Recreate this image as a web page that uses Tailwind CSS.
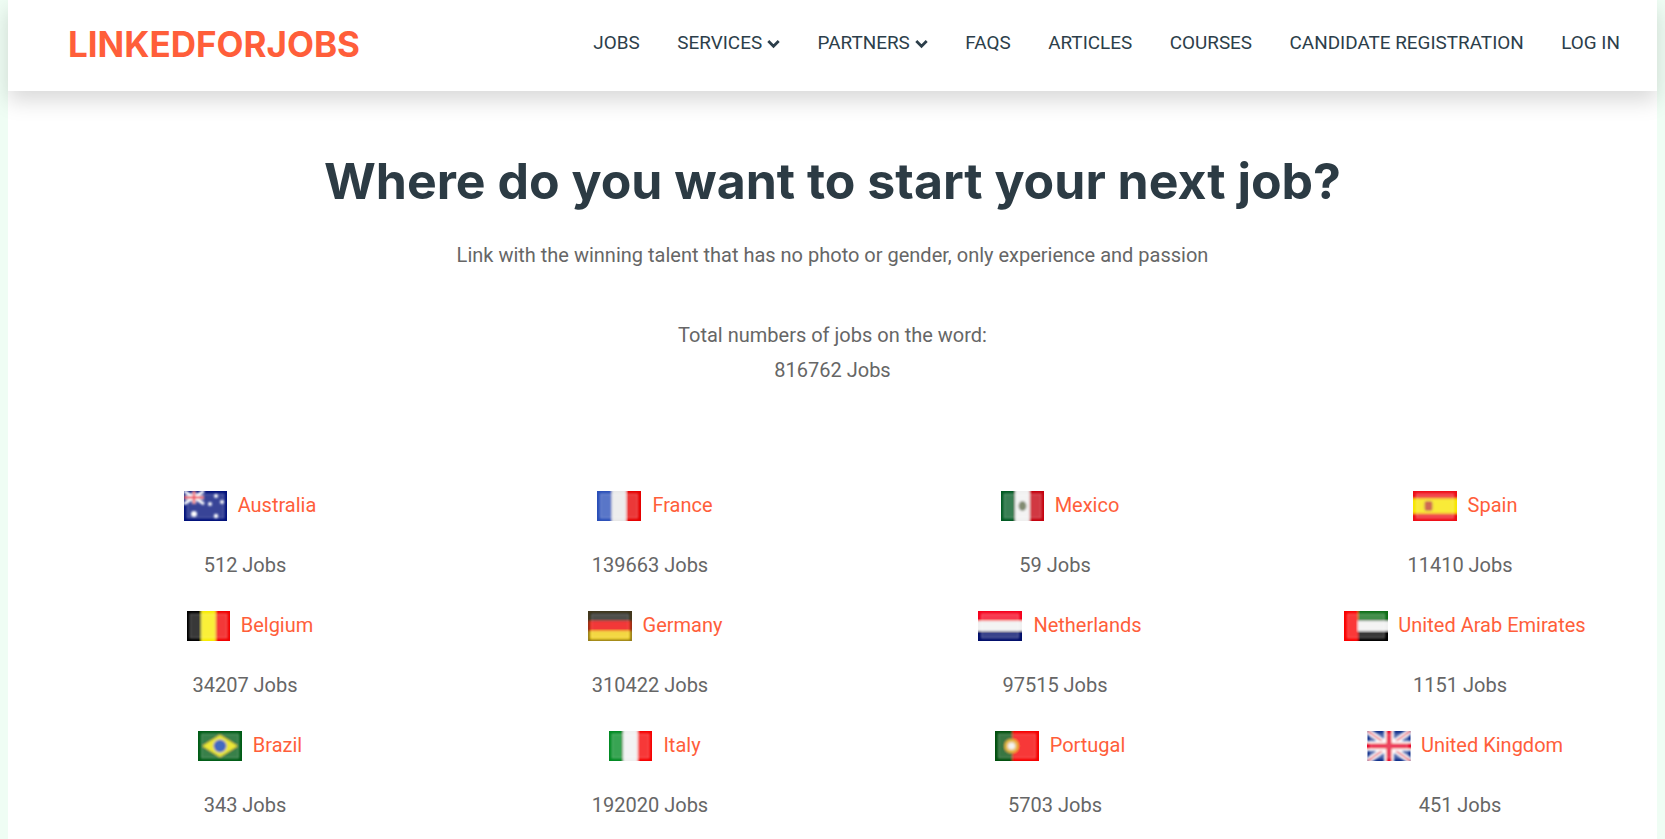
<!DOCTYPE html>
<html lang="en">
<head>
  <meta charset="UTF-8">
  <meta name="viewport" content="width=device-width, initial-scale=1.0">
  <title>LinkedForJobs</title>
  <script src="https://cdn.jsdelivr.net/npm/@tailwindcss/browser@4"></script>
</head>
<body class="h-screen overflow-hidden bg-[#effdf4] px-2 font-['Roboto',sans-serif] text-[20px] text-[#666666]">
  <!-- shared blur and gloss for the flags -->
  <svg class="absolute h-0 w-0">
    <defs>
      <filter id="soft" x="-10%" y="-10%" width="120%" height="120%"><feGaussianBlur stdDeviation="0.9"/></filter>
      <g id="gloss">
        <rect x="3" y="3" width="37" height="24" fill="#fff" fill-opacity="0.22" stroke="#fff" stroke-opacity="0.3" filter="url(#soft)"/>
      </g>
    </defs>
  </svg>

  <div class="h-full bg-white">
    <header class="flex h-[91px] items-center justify-between pl-[60px] pr-[37px] shadow-[0_10px_20px_rgba(0,0,0,0.15)]">
      <a class="-mt-[2px] font-['Inter',sans-serif] text-[35px] font-bold text-[#ff5e3a]">LINKEDFORJOBS</a>
      <nav class="-mt-[4px] flex items-center gap-[37.5px] text-[18.9px] leading-none text-[#2c3e4a]">
        <a>JOBS</a>
        <a class="flex items-center gap-[5px]">SERVICES
          <svg class="mt-[1px] h-[10px] w-[13px]" viewBox="0 0 13 10" fill="none" stroke="#2c3e4a" stroke-width="2.8"><path d="M1.300 2 6.500 7.200 11.700 2"/></svg>
        </a>
        <a class="flex items-center gap-[5px]">PARTNERS
          <svg class="mt-[1px] h-[10px] w-[13px]" viewBox="0 0 13 10" fill="none" stroke="#2c3e4a" stroke-width="2.8"><path d="M1.300 2 6.500 7.200 11.700 2"/></svg>
        </a>
        <a>FAQS</a>
        <a>ARTICLES</a>
        <a>COURSES</a>
        <a>CANDIDATE REGISTRATION</a>
        <a>LOG IN</a>
      </nav>
    </header>

    <main>
      <section class="text-center">
        <h1 class="pt-[56px] font-['Inter',sans-serif] text-[50px] font-bold leading-[68px] text-[#2c3b44]">Where do you want to start your next job?</h1>
        <p class="mt-[23px] leading-[35px]">Link with the winning talent that has no photo or gender, only experience and passion</p>
        <p class="mt-[45px] leading-[35px]">Total numbers of jobs on the word:</p>
        <p class="leading-[35px]">816762 Jobs</p>
      </section>

      <ul class="ml-[34.5px] mt-[103px] grid w-[1620px] grid-cols-4">
        <li class="flex h-[120px] flex-col items-center">
          <a class="flex h-[30px] items-center gap-[11px] pl-[10px] text-[#ff5e3a]">
            <svg class="h-[30px] w-[43px]" viewBox="0 0 43 30"><rect width="43" height="30" fill="#00107a"/><g filter="url(#soft)"><path d="M0 0l20 13M20 0L0 13" stroke="#fff" stroke-width="3"/><path d="M10 0v13M0 6.500h20" stroke="#fff" stroke-width="4"/><path d="M10 0v13M0 6.500h20" stroke="#e8112d" stroke-width="2.500"/><g fill="#fff"><circle cx="10" cy="23" r="3"/><circle cx="32" cy="5" r="2"/><circle cx="32" cy="25" r="2.200"/><circle cx="26" cy="13" r="2"/><circle cx="38" cy="11" r="2"/></g></g><use href="#gloss"/></svg>
            <span class="-mt-[2px]">Australia</span>
          </a>
          <p class="mt-[29px] leading-[30px]">512 Jobs</p>
        </li>
        <li class="flex h-[120px] flex-col items-center">
          <a class="flex h-[30px] items-center gap-[11px] pl-[10px] text-[#ff5e3a]">
            <svg class="h-[30px] w-[44px]" viewBox="0 0 43 30"><g filter="url(#soft)"><path d="M-3-3h17.300v36H-3z" fill="#2a50b8"/><path d="M14.300-3h14.400v36H14.300z" fill="#e8e8e8"/><path d="M28.700-3H46v36H28.700z" fill="#e50000"/></g><use href="#gloss"/></svg>
            <span class="-mt-[2px]">France</span>
          </a>
          <p class="mt-[29px] leading-[30px]">139663 Jobs</p>
        </li>
        <li class="flex h-[120px] flex-col items-center">
          <a class="flex h-[30px] items-center gap-[11px] pl-[10px] text-[#ff5e3a]">
            <svg class="h-[30px] w-[43px]" viewBox="0 0 43 30"><g filter="url(#soft)"><path d="M-3-3h17.300v36H-3z" fill="#005a20"/><path d="M14.300-3h14.400v36H14.300z" fill="#f0f0f0"/><path d="M28.700-3H46v36H28.700z" fill="#c40010"/><ellipse cx="21.500" cy="15" rx="4" ry="5" fill="#5f6a48"/></g><use href="#gloss"/></svg>
            <span class="-mt-[2px]">Mexico</span>
          </a>
          <p class="mt-[29px] leading-[30px]">59 Jobs</p>
        </li>
        <li class="flex h-[120px] flex-col items-center">
          <a class="flex h-[30px] items-center gap-[11px] pl-[10px] text-[#ff5e3a]">
            <svg class="h-[30px] w-[44px]" viewBox="0 0 43 30"><g filter="url(#soft)"><rect x="-3" y="-3" width="49" height="36" fill="#ee0a12"/><rect x="-3" y="7.500" width="49" height="15" fill="#f7e500"/><rect x="11" y="10" width="8" height="10" rx="2" fill="#c04020"/></g><use href="#gloss"/></svg>
            <span class="-mt-[2px]">Spain</span>
          </a>
          <p class="mt-[29px] leading-[30px]">11410 Jobs</p>
        </li>

        <li class="flex h-[120px] flex-col items-center">
          <a class="flex h-[30px] items-center gap-[11px] pl-[10px] text-[#ff5e3a]">
            <svg class="h-[30px] w-[43px]" viewBox="0 0 43 30"><g filter="url(#soft)"><path d="M-3-3h17.300v36H-3z" fill="#000"/><path d="M14.300-3h14.400v36H14.300z" fill="#f8ec00"/><path d="M28.700-3H46v36H28.700z" fill="#f00000"/></g><use href="#gloss"/></svg>
            <span class="-mt-[2px]">Belgium</span>
          </a>
          <p class="mt-[29px] leading-[30px]">34207 Jobs</p>
        </li>
        <li class="flex h-[120px] flex-col items-center">
          <a class="flex h-[30px] items-center gap-[11px] pl-[10px] text-[#ff5e3a]">
            <svg class="h-[30px] w-[44px]" viewBox="0 0 43 30"><g filter="url(#soft)"><rect x="-3" y="-3" width="49" height="13" fill="#1a1a14"/><rect x="-3" y="10" width="49" height="10" fill="#ee0000"/><rect x="-3" y="20" width="49" height="13" fill="#f0cc10"/><path d="M0 0h43v30H0z" fill="none" stroke="#5a4a20" stroke-width="3" stroke-opacity="0.7"/></g><use href="#gloss"/></svg>
            <span class="-mt-[2px]">Germany</span>
          </a>
          <p class="mt-[29px] leading-[30px]">310422 Jobs</p>
        </li>
        <li class="flex h-[120px] flex-col items-center">
          <a class="flex h-[30px] items-center gap-[11px] pl-[10px] text-[#ff5e3a]">
            <svg class="h-[30px] w-[44px]" viewBox="0 0 43 30"><g filter="url(#soft)"><rect x="-3" y="-3" width="49" height="13" fill="#f5001e"/><rect x="-3" y="10" width="49" height="10" fill="#f0f0f0"/><rect x="-3" y="20" width="49" height="13" fill="#000e6a"/></g><use href="#gloss"/></svg>
            <span class="-mt-[2px]">Netherlands</span>
          </a>
          <p class="mt-[29px] leading-[30px]">97515 Jobs</p>
        </li>
        <li class="flex h-[120px] flex-col items-center">
          <a class="flex h-[30px] items-center gap-[10px] pl-[10px] text-[#ff5e3a]">
            <svg class="h-[30px] w-[44px]" viewBox="0 0 43 30"><g filter="url(#soft)"><rect x="13.500" y="-3" width="33" height="13" fill="#0a6e14"/><rect x="13.500" y="10" width="33" height="10" fill="#f0f0f0"/><rect x="13.500" y="20" width="33" height="13" fill="#000"/><rect x="-3" y="-3" width="16.500" height="36" fill="#fa0000"/></g><use href="#gloss"/></svg>
            <span class="-mt-[2px]">United Arab Emirates</span>
          </a>
          <p class="mt-[29px] leading-[30px]">1151 Jobs</p>
        </li>

        <li class="flex h-[120px] flex-col items-center">
          <a class="flex h-[30px] items-center gap-[11px] pl-[10px] text-[#ff5e3a]">
            <svg class="h-[30px] w-[44px]" viewBox="0 0 43 30"><g filter="url(#soft)"><rect x="-3" y="-3" width="49" height="36" fill="#045c12"/><path d="M21.500 4 39 15 21.500 26 4 15z" fill="#e8e000"/><circle cx="21.500" cy="15" r="6.500" fill="#1040b0"/></g><use href="#gloss"/></svg>
            <span class="-mt-[2px]">Brazil</span>
          </a>
          <p class="mt-[29px] leading-[30px]">343 Jobs</p>
        </li>
        <li class="flex h-[120px] flex-col items-center">
          <a class="flex h-[30px] items-center gap-[11px] pl-[10px] text-[#ff5e3a]">
            <svg class="h-[30px] w-[43px]" viewBox="0 0 43 30"><g filter="url(#soft)"><path d="M-3-3h17.300v36H-3z" fill="#008a20"/><path d="M14.300-3h14.400v36H14.300z" fill="#f0f0f0"/><path d="M28.700-3H46v36H28.700z" fill="#f50000"/></g><use href="#gloss"/></svg>
            <span class="-mt-[2px]">Italy</span>
          </a>
          <p class="mt-[29px] leading-[30px]">192020 Jobs</p>
        </li>
        <li class="flex h-[120px] flex-col items-center">
          <a class="flex h-[30px] items-center gap-[11px] pl-[10px] text-[#ff5e3a]">
            <svg class="h-[30px] w-[44px]" viewBox="0 0 43 30"><g filter="url(#soft)"><rect x="-3" y="-3" width="49" height="36" fill="#f50000"/><rect x="-3" y="-3" width="20" height="36" fill="#045010"/><circle cx="16" cy="15" r="7" fill="#e0a810"/><circle cx="16" cy="15" r="3.500" fill="#f0f0f0"/></g><use href="#gloss"/></svg>
            <span class="-mt-[2px]">Portugal</span>
          </a>
          <p class="mt-[29px] leading-[30px]">5703 Jobs</p>
        </li>
        <li class="flex h-[120px] flex-col items-center">
          <a class="flex h-[30px] items-center gap-[10px] pl-[10px] text-[#ff5e3a]">
            <svg class="h-[30px] w-[44px]" viewBox="0 0 43 30"><rect width="43" height="30" fill="#10308c"/><g filter="url(#soft)"><path d="M0 0l43 30M43 0L0 30" stroke="#fff" stroke-width="6"/><path d="M0 0l43 30M43 0L0 30" stroke="#e02040" stroke-width="2"/><path d="M21.500-3v36M-3 15h49" stroke="#fff" stroke-width="10"/><path d="M21.500-3v36M-3 15h49" stroke="#e81030" stroke-width="6"/></g><use href="#gloss"/></svg>
            <span class="-mt-[2px]">United Kingdom</span>
          </a>
          <p class="mt-[29px] leading-[30px]">451 Jobs</p>
        </li>
      </ul>
    </main>
  </div>
</body>
</html>
